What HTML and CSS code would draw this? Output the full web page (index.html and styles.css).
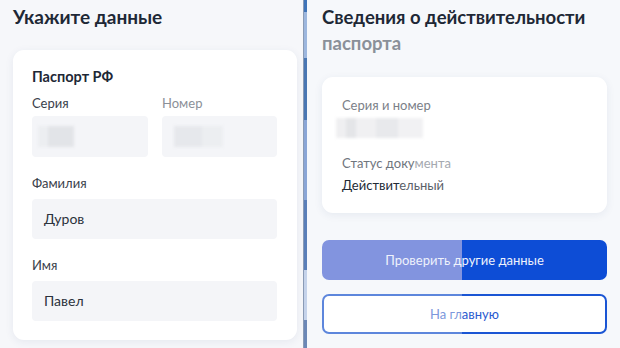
FILE: index.html
```html
<!DOCTYPE html>
<html lang="ru">
<head>
<meta charset="utf-8">
<link rel="stylesheet" href="styles.css">
</head>
<body>
<div class="page">
  <section class="left">
    <h1 class="title">Укажите данные</h1>
    <div class="card form">
      <h2 class="card-title">Паспорт РФ</h2>
      <div class="pair">
        <div class="field">
          <div class="label">Серия</div>
          <div class="input"><span class="mask mask-a"></span></div>
        </div>
        <div class="field">
          <div class="label muted">Номер</div>
          <div class="input"><span class="mask mask-b"></span></div>
        </div>
      </div>
      <div class="field">
        <div class="label">Фамилия</div>
        <div class="input">Дуров</div>
      </div>
      <div class="field">
        <div class="label">Имя</div>
        <div class="input">Павел</div>
      </div>
    </div>
  </section>
  <div class="divider"></div>
  <section class="right">
    <h1 class="title rtitle">Сведения о действительности <span class="fade">паспорта</span></h1>
    <div class="card info">
      <div class="info-label">Серия и номер</div>
      <div class="mask mask-c"></div>
      <div class="info-label status">Статус доку<span class="fade2">мента</span></div>
      <div class="info-value">Действит<span class="fade3">ельный</span></div>
    </div>
    <div class="actions">
      <button class="btn primary">Проверить другие данные</button>
      <button class="btn outline"><span class="fade4">На гл</span>авную</button>
    </div>
  </section>
</div>
</body>
</html>
```
FILE: styles.css
```css
* { box-sizing: border-box; margin: 0; padding: 0; }
html, body { width: 620px; height: 348px; overflow: hidden; }
body { font-family: Lato, "Open Sans", "Noto Sans", sans-serif; background: #f5f7fa; color: #1f2733; }
.page { display: flex; height: 348px; }
.left { width: 303px; padding: 4px 6px 0 13px; background: #f6f7fa; }
.divider { width: 4px; background: linear-gradient(180deg, #3f74b8 0 12px, #9db7de 12px 58px, #4a77b3 58px 120px, #8aa6d6 120px 200px, #5a7fb8 200px 270px, #c5d3ea 270px 320px, #6c88b6 320px); border-left: 1px solid #8a9bb5; }
.right { flex: 1; padding: 4px 13px 0 15px; background: #f6f8fb; }
.title { font-size: 19px; font-weight: 700; line-height: 26px; color: #1e2836; letter-spacing: 0; }
.rtitle { font-size: 18.5px; }
.fade { color: #8a9099; }
.card { background: #fff; border-radius: 11px; box-shadow: 0 2px 8px rgba(40, 60, 110, 0.08); }
.form { margin-top: 20px; padding: 18px 20px 19px 19px; }
.card-title { font-size: 14.5px; font-weight: 700; line-height: 18px; color: #1e2836; }
.pair { display: grid; grid-template-columns: 116px 115px; column-gap: 14px; }
.field { display: flex; flex-direction: column; }
.label { font-size: 13px; line-height: 16px; color: #3a414b; margin-top: 9px; margin-bottom: 5px; }
.form > .field .label { margin-top: 18px; margin-bottom: 8px; }
.form > .field + .field .label { margin-top: 18px; }
.label.muted { color: #8b9098; }
.input { height: 41px; background: #f4f5f8; border-radius: 4px; font-size: 14px; line-height: 41px; padding-left: 12px; color: #2b323c; position: relative; }
.form > .field .input { height: 40px; line-height: 40px; }
.mask { display: block; position: absolute; top: 10px; height: 21px; filter: blur(1.5px); }
.mask-a { left: 6px; width: 36px; background: linear-gradient(90deg, #eceef1 0 10px, #e2e4e8 10px); }
.mask-b { left: 12px; width: 49px; background: linear-gradient(90deg, #e6e8ec 0 28px, #eceef1 28px); }
.info { margin-top: 21px; padding: 20px 20px 19px 20px; height: 136px; }
.info-label { font-size: 13px; line-height: 16px; color: #7b8088; }
.mask-c { position: static; width: 87px; height: 20px; margin: 5px 0 0 -6px; background: linear-gradient(90deg, #efeff1 0 10px, #e4e5e8 10px 20px, #f0f0f2 20px 40px, #e8e9ec 40px 62px, #f1f1f3 62px); filter: blur(1.5px); }
.status { margin-top: 17px; color: #6f757d; }
.fade2 { color: #a5a9b0; }
.info-value { font-size: 13px; line-height: 16px; color: #222a35; margin-top: 6px; }
.fade3 { color: #5a6068; }
.actions { display: flex; flex-direction: column; gap: 14px; margin-top: 27px; }
.btn { height: 40px; border-radius: 7px; font-family: inherit; font-size: 13px; border: none; }
.primary { color: #eef2fc; background: linear-gradient(90deg, #8294df 0 140px, #0d4dd6 140px); }
.outline { height: 40px; color: #2a5bd0; border: 2px solid transparent; background: linear-gradient(#fff, #fff) padding-box, linear-gradient(90deg, #5d86dc 0 140px, #1a55d4 140px) border-box; }
.fade4 { color: #7c97dc; }
```
